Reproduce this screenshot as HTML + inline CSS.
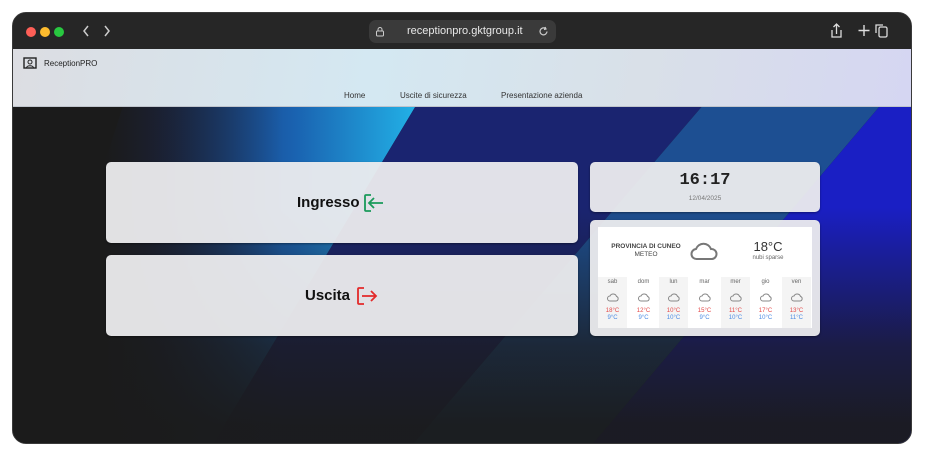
<!DOCTYPE html>
<html><head><meta charset="utf-8"><style>
*{margin:0;padding:0;box-sizing:border-box}
body{width:926px;height:456px;background:#fff;font-family:"Liberation Sans",sans-serif;position:relative;overflow:hidden}
.win{position:absolute;left:12px;top:12px;width:900px;height:432px;border-radius:14px;background:#1b1b1b;overflow:hidden;border:1.5px solid #3a3a3a}
.tb{position:absolute;left:0;top:0;width:100%;height:36px;background:#262626}
.dot{position:absolute;top:14px;width:10px;height:10px;border-radius:50%}
.url{position:absolute;left:356px;top:7px;width:187px;height:23px;border-radius:7px;background:#3a3a3a;color:#e8e8e8;font-size:11px;line-height:23px}
.main{position:absolute;left:0;top:36px;width:100%;height:396px;overflow:hidden}
.poly{position:absolute;left:0;top:0;width:100%;height:100%}
.hdr{position:absolute;left:0;top:0;width:100%;height:58px;background:linear-gradient(100deg,#dcdde2 0%,#d4e8f2 40%,#d9e0e8 70%,#d5d6f2 100%);border-bottom:1px solid #bfc4cc}
.nav{position:absolute;top:42px;font-size:8px;color:#333}
.card{position:absolute;background:rgba(236,236,238,0.95);border-radius:5px;box-shadow:0 1px 2px rgba(0,0,0,.4)}
.big{font-size:15px;font-weight:bold;color:#111;position:absolute}
.day{position:absolute;top:50px;width:29px;height:51px;text-align:center;font-size:6px;color:#666;padding-top:2px;line-height:7px}
.day svg{display:block;margin:7px auto 5px}
.day .hi{color:#e34a4a}.day .lo{color:#4a8ae3}
</style></head><body>
<div class="win">
 <div class="tb">
  <div class="dot" style="left:13px;background:#fe5f57"></div>
  <div class="dot" style="left:27px;background:#febc2e"></div>
  <div class="dot" style="left:41px;background:#28c840"></div>
  <svg style="position:absolute;left:70px;top:12px" width="30" height="12" viewBox="0 0 30 12"><path d="M5 1L1 6l4 5M22 1l4 5-4 5" fill="none" stroke="#ccc" stroke-width="1.5"/></svg>
  <div class="url">
   <svg style="position:absolute;left:6px;top:6px" width="10" height="11" viewBox="0 0 10 11"><rect x="1.5" y="5" width="7" height="5" rx="1" fill="none" stroke="#ccc"/><path d="M3 5V3.5a2 2 0 0 1 4 0V5" fill="none" stroke="#ccc"/></svg>
   <span style="position:absolute;left:38px">receptionpro.gktgroup.it</span>
   <svg style="position:absolute;left:169px;top:6px" width="11" height="11" viewBox="0 0 11 11"><path d="M9 5.5A3.5 3.5 0 1 1 7.5 2.5M7 1l1 2-2 .5" fill="none" stroke="#ccc" stroke-width="1.2"/></svg>
  </div>
  <svg style="position:absolute;left:816px;top:10px" width="60" height="16" viewBox="0 0 60 16"><path d="M3 7v7h9V7M7.5 11V1M4.5 4l3-3 3 3" fill="none" stroke="#ddd" stroke-width="1.3"/><path d="M35 2v11M29.5 7.5h11" stroke="#ddd" stroke-width="1.4"/><rect x="56" y="4" width="8" height="10" rx="1.5" fill="none" stroke="#ddd" stroke-width="1.3" transform="translate(-6 0)"/><path d="M47 10V2h7" fill="none" stroke="#ddd" stroke-width="1.3"/></svg>
 </div>
 <div class="main">
  <svg class="poly" viewBox="0 0 900 396" preserveAspectRatio="none">
   <defs>
    <linearGradient id="g1" x1="0" y1="0" x2="1" y2="0"><stop offset="0" stop-color="#1b1b1b"/><stop offset="0.35" stop-color="#1a2a60"/><stop offset="0.7" stop-color="#1a62b0"/><stop offset="1" stop-color="#22b0e6"/></linearGradient>
    <linearGradient id="dk" x1="0" y1="0" x2="0" y2="1"><stop offset="0.4" stop-color="#1b1b1b" stop-opacity="0"/><stop offset="0.75" stop-color="#1b1b1b" stop-opacity="0.75"/><stop offset="0.95" stop-color="#1b1b1b" stop-opacity="0.95"/></linearGradient>
    <linearGradient id="lf" x1="0" y1="0" x2="1" y2="0"><stop offset="0.1" stop-color="#1b1b1b" stop-opacity="1"/><stop offset="0.3" stop-color="#1b1b1b" stop-opacity="0"/></linearGradient>
   </defs>
   <polygon points="110,58 403,58 200,396 0,396" fill="url(#g1)"/>
   <polygon points="403,58 690,58 400,396 200,396" fill="#1a2470"/>
   <polygon points="690,58 868,58 580,396 400,396" fill="#1d4f92"/>
   <polygon points="868,58 900,58 900,396 580,396" fill="#1a1fc4"/>
   <rect x="0" y="0" width="900" height="396" fill="url(#lf)"/>
   <rect x="0" y="0" width="900" height="396" fill="url(#dk)"/>
  </svg>
  <div class="hdr">
   <svg style="position:absolute;left:10px;top:8px" width="14" height="13" viewBox="0 0 14 13"><rect x="1" y="1" width="12" height="10" fill="none" stroke="#222" stroke-width="1.4"/><circle cx="7" cy="5" r="2" fill="none" stroke="#222"/><path d="M3.5 11c0-3 7-3 7 0" fill="none" stroke="#222"/></svg>
   <div style="position:absolute;left:31px;top:10px;font-size:8px;color:#222">ReceptionPRO</div>
   <div class="nav" style="left:331px">Home</div>
   <div class="nav" style="left:387px">Uscite di sicurezza</div>
   <div class="nav" style="left:488px">Presentazione azienda</div>
  </div>
 </div>
 <div class="card" style="left:93px;top:149px;width:472px;height:81px"></div>
 <div class="big" style="left:284px;top:181px">Ingresso</div>
 <svg style="position:absolute;left:350px;top:180px" width="22" height="20" viewBox="0 0 22 20"><path d="M8 2H3a1 1 0 0 0-1 1v14a1 1 0 0 0 1 1h5" fill="none" stroke="#1a9a5a" stroke-width="1.8"/><path d="M20 10H7M11 5l-5 5 5 5" fill="none" stroke="#1a9a5a" stroke-width="1.8"/></svg>
 <div class="card" style="left:93px;top:242px;width:472px;height:81px"></div>
 <div class="big" style="left:292px;top:274px">Uscita</div>
 <svg style="position:absolute;left:343px;top:273px" width="22" height="20" viewBox="0 0 22 20"><path d="M8 2H3a1 1 0 0 0-1 1v14a1 1 0 0 0 1 1h5" fill="none" stroke="#e32a2a" stroke-width="1.8"/><path d="M6 10h13M15 5l5 5-5 5" fill="none" stroke="#e32a2a" stroke-width="1.8"/></svg>
 <div class="card" style="left:577px;top:149px;width:230px;height:50px">
  <div style="position:absolute;width:100%;top:9px;text-align:center;font-family:'Liberation Mono',monospace;font-weight:bold;font-size:17px;color:#222">16:17</div>
  <div style="position:absolute;width:100%;top:33px;text-align:center;font-size:6.5px;color:#777">12/04/2025</div>
 </div>
 <div class="card" style="left:577px;top:207px;width:230px;height:116px">
  <div style="position:absolute;left:8px;top:7px;width:214px;height:101px;background:#fff">
   <div style="position:absolute;left:6px;top:16px;width:84px;text-align:center;font-size:6.5px;color:#444;line-height:8px"><b>PROVINCIA DI CUNEO</b><br>METEO</div>
   <svg style="position:absolute;left:92px;top:13px" width="28" height="22" viewBox="0 0 28 22"><path d="M7 19a5 5 0 0 1-1-10 8 8 0 0 1 15 0 5 5 0 0 1 1 10z" fill="none" stroke="#777" stroke-width="2"/></svg>
   <div style="position:absolute;left:140px;top:12px;width:60px;text-align:center;font-size:13px;color:#333">18°C</div>
   <div style="position:absolute;left:140px;top:28px;width:60px;text-align:center;font-size:6px;color:#666">nubi sparse</div>
   <div class="day" style="left:0;background:#f4f4f4">sab<svg width="12" height="10" viewBox="0 0 12 10"><path d="M3 8a2.5 2.5 0 0 1 0-5 3.5 3.5 0 0 1 6.5 0.5A2.3 2.3 0 0 1 9 8z" fill="none" stroke="#888"/></svg><span class="hi">18°C</span><br><span class="lo">9°C</span></div>
   <div class="day" style="left:31px">dom<svg width="12" height="10" viewBox="0 0 12 10"><path d="M3 8a2.5 2.5 0 0 1 0-5 3.5 3.5 0 0 1 6.5 0.5A2.3 2.3 0 0 1 9 8z" fill="none" stroke="#888"/></svg><span class="hi">12°C</span><br><span class="lo">9°C</span></div>
   <div class="day" style="left:61px;background:#f4f4f4">lun<svg width="12" height="10" viewBox="0 0 12 10"><path d="M3 8a2.5 2.5 0 0 1 0-5 3.5 3.5 0 0 1 6.5 0.5A2.3 2.3 0 0 1 9 8z" fill="none" stroke="#888"/></svg><span class="hi">10°C</span><br><span class="lo">10°C</span></div>
   <div class="day" style="left:92px">mar<svg width="12" height="10" viewBox="0 0 12 10"><path d="M3 8a2.5 2.5 0 0 1 0-5 3.5 3.5 0 0 1 6.5 0.5A2.3 2.3 0 0 1 9 8z" fill="none" stroke="#888"/></svg><span class="hi">15°C</span><br><span class="lo">9°C</span></div>
   <div class="day" style="left:123px;background:#f4f4f4">mer<svg width="12" height="10" viewBox="0 0 12 10"><path d="M3 8a2.5 2.5 0 0 1 0-5 3.5 3.5 0 0 1 6.5 0.5A2.3 2.3 0 0 1 9 8z" fill="none" stroke="#888"/></svg><span class="hi">11°C</span><br><span class="lo">10°C</span></div>
   <div class="day" style="left:153px">gio<svg width="12" height="10" viewBox="0 0 12 10"><path d="M3 8a2.5 2.5 0 0 1 0-5 3.5 3.5 0 0 1 6.5 0.5A2.3 2.3 0 0 1 9 8z" fill="none" stroke="#888"/></svg><span class="hi">17°C</span><br><span class="lo">10°C</span></div>
   <div class="day" style="left:184px;background:#f4f4f4">ven<svg width="12" height="10" viewBox="0 0 12 10"><path d="M3 8a2.5 2.5 0 0 1 0-5 3.5 3.5 0 0 1 6.5 0.5A2.3 2.3 0 0 1 9 8z" fill="none" stroke="#888"/></svg><span class="hi">13°C</span><br><span class="lo">11°C</span></div>
  </div>
 </div>
</div>
</body></html>
